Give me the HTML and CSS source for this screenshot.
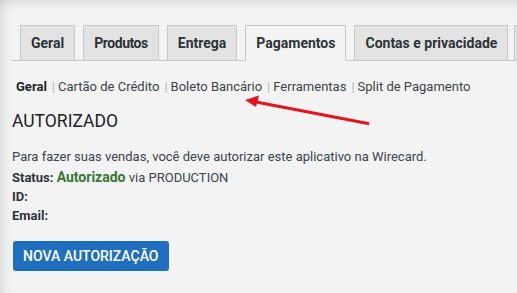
FILE: index.html
```html
<!DOCTYPE html>
<html lang="pt-BR">
<head>
  <meta charset="UTF-8" />
  <meta name="viewport" content="width=device-width, initial-scale=1.0" />
  <title>Configurações - Pagamentos</title>
  <link rel="stylesheet" href="styles.css">
</head>

<body>
  <div class="page">
    <nav class="nav-tab-wrapper">
      <a class="nav-tab" href="#">Geral</a>
      <a class="nav-tab nav-tab-tight" href="#">Produtos</a>
      <a class="nav-tab" href="#">Entrega</a>
      <a class="nav-tab nav-tab-active" href="#">Pagamentos</a>
      <a class="nav-tab" href="#">Contas e privacidade</a>
      <a class="nav-tab nav-tab-more" href="#" aria-label="E-mails"></a>
    </nav>

    <ul class="subsubsub">
      <li><a class="current" href="#">Geral</a><span class="sep">|</span></li>
      <li><a href="#">Cartão de Crédito</a><span class="sep">|</span></li>
      <li><a href="#">Boleto Bancário</a><span class="sep">|</span></li>
      <li><a href="#">Ferramentas</a><span class="sep">|</span></li>
      <li><a href="#">Split de Pagamento</a></li>
    </ul>

    <h2 class="section-title">AUTORIZADO</h2>

    <div class="auth-info">
      <p class="intro">Para fazer suas vendas, você deve autorizar este aplicativo na Wirecard.</p>
      <p><strong>Status:</strong> <strong class="ok">Autorizado</strong> via PRODUCTION</p>
      <p><strong>ID:</strong></p>
      <p><strong>Email:</strong></p>
    </div>

    <a class="button-primary" href="#">NOVA AUTORIZAÇÃO</a>

    <!-- annotation arrow -->
    <svg class="arrow" width="517" height="293" viewBox="0 0 517 293">
      <line x1="368" y1="123.5" x2="256" y2="102" stroke="#e3141b" stroke-width="3" stroke-linecap="round" />
      <polygon points="245,100 259,95.5 256,107" fill="#e3141b" />
    </svg>
  </div>
</body>
</html>
```

FILE: styles.css
```css
html, body {
  margin: 0;
  padding: 0;
}

body {
  font-family: Roboto, 'Noto Sans', sans-serif;
  font-size: 13px;
  color: #3c434a;
  background: #f3f3f3;
}

.page {
  position: relative;
  height: 293px;
  overflow: hidden;
  padding: 25px 0 0 12px;
  box-sizing: border-box;
  box-shadow: inset 0 12px 12px -10px rgba(0, 0, 0, 0.12),
              inset 12px 0 12px -10px rgba(0, 0, 0, 0.12);
}

.nav-tab-wrapper {
  display: flex;
  white-space: nowrap;
  border-bottom: 1px solid #c8c8c8;
}

.nav-tab {
  flex: none;
  margin-left: 8px;
  margin-bottom: -1px;
  padding: 5px 10px;
  font-size: 14px;
  line-height: 24px;
  font-weight: 700;
  color: #2c3338;
  text-decoration: none;
  background: #e3e3e3;
  border: 1px solid #c8c8c8;
}

.nav-tab-tight {
  letter-spacing: -0.45px;
}

.nav-tab-more {
  width: 40px;
  margin-left: 6px;
}

.nav-tab-active {
  background: #f3f3f3;
  border-bottom-color: #f3f3f3;
}

.subsubsub {
  list-style: none;
  margin: 16px 0 0 4px;
  padding: 0;
  display: flex;
  line-height: 20px;
}

.subsubsub a {
  color: #3c434a;
  text-decoration: none;
}

.subsubsub a.current {
  color: #1d2327;
  font-weight: 700;
}

.sep {
  color: #b4b6b9;
  margin: 0 3px 0 5px;
}

.section-title {
  margin: 12px 0 0;
  font-size: 17.5px;
  font-weight: 400;
  line-height: 24px;
  color: #1d2327;
}

.auth-info {
  margin-top: 14px;
}

.auth-info p {
  margin: 0;
  line-height: 19px;
}

.auth-info .intro {
  margin-bottom: 2px;
}

.auth-info strong {
  color: #2c3338;
}

.auth-info strong.ok {
  color: #3a7534;
  font-size: 14px;
}

.button-primary {
  display: inline-block;
  margin: 16px 0 0 1px;
  padding: 0 10px;
  height: 30px;
  line-height: 30px;
  font-size: 14px;
  font-weight: 500;
  color: #fff;
  text-decoration: none;
  background: #1f6fbe;
  border-radius: 3px;
}

.arrow {
  position: absolute;
  left: 0;
  top: 0;
  pointer-events: none;
}
```
